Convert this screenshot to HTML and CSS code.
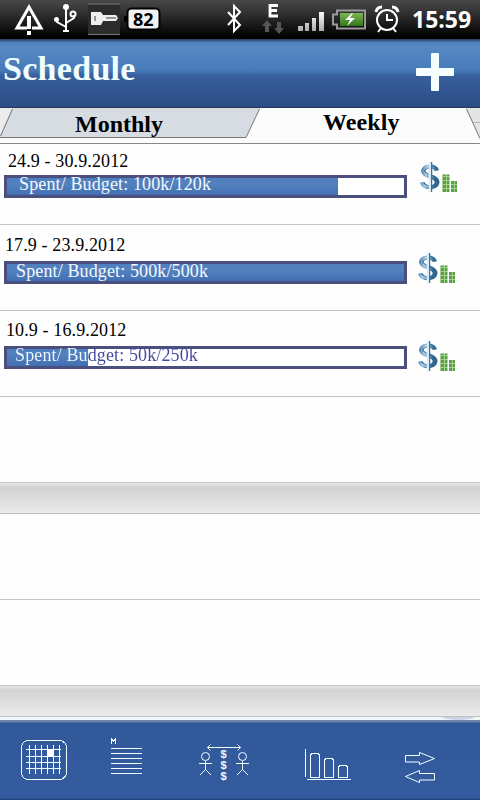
FILE: index.html
```html
<!DOCTYPE html>
<html lang="en">
<head>
<meta charset="utf-8">
<title>Schedule</title>
<link rel="stylesheet" href="styles.css">
</head>
<body>
<svg class="defs" aria-hidden="true">
  <defs>
    <linearGradient id="coin" x1="0" y1="0" x2="1" y2="0.2">
      <stop offset="0" stop-color="#3b7cab"/><stop offset="0.35" stop-color="#a9cde6"/><stop offset="0.6" stop-color="#7fabcb"/><stop offset="1" stop-color="#2d6690"/>
    </linearGradient>
    <linearGradient id="bars" x1="0" y1="0" x2="0" y2="1">
      <stop offset="0" stop-color="#fff"/><stop offset="1" stop-color="#aaa"/>
    </linearGradient>
    <linearGradient id="charge" x1="0" y1="0" x2="0" y2="1">
      <stop offset="0" stop-color="#7fb552"/><stop offset="1" stop-color="#31761c"/>
    </linearGradient>
    <pattern id="notes" width="4" height="4" patternUnits="userSpaceOnUse">
      <rect width="4" height="4" fill="#58a04a"/><path d="M0 3.5H4M3.5 0V4" stroke="#a5d090" stroke-width="1"/>
    </pattern>
    <symbol id="money" viewBox="0 0 40 32">
      <path id="ess" d="M18 9.500C17 4 5 4 4.500 10C4.500 16 18.500 14.500 18.500 21.500C17.500 28 5 27.500 3.500 21.500" fill="none" stroke="#2c648c" stroke-width="4"/>
      <path d="M16.800 9.500C16 4.500 4.500 4 3.700 10C4 16 17.500 14.500 17.300 21.500C16.500 27.500 4 27.500 2.700 21.500" fill="none" stroke="url(#coin)" stroke-width="3.200"/>
      <path d="M12.500 1V31" stroke="#3d7199" stroke-width="1.500"/><path d="M10.800 1V31" stroke="#dceefa" stroke-width="2.200"/>
      <path d="M23 13.500h7.500V31H23zM32 20h6v11h-6z" fill="url(#notes)"/>
    </symbol>
  </defs>
</svg>
<div class="status">
  <svg width="480" height="39" viewBox="0 0 480 39" fill="none" stroke="#fff">
    <path d="M27 28H17L29 7L41 28H32" stroke-width="3"/><path d="M29 16V29M29 31V35" stroke-width="4"/>
    <g stroke-width="2"><path d="M66 8V31M66 27L57 22V19M66 23L74 18V15"/><path d="M63 31h6"/><circle cx="66" cy="7" r="3" fill="#fff" stroke="none"/><circle cx="56.500" cy="19.500" r="2.500" fill="#fff" stroke="none"/><circle cx="73" cy="14" r="2.500"/></g>
    <rect x="88" y="4" width="32" height="31" fill="#2c2c2c" stroke="none"/><path d="M88 4h32M88 34.500h32" stroke="#777"/>
    <path d="M91 12h10l2 3h13l2 3-2 3h-13l-2 4H91z" fill="#eee" stroke="none"/><path d="M95 16v5M106 18h10" stroke="#777" stroke-width="1.500"/>
    <rect x="127.500" y="8.500" width="32" height="21" rx="4" fill="#f2f2f2" stroke="#000" stroke-width="2"/><path d="M124 19h4" stroke="#000" stroke-width="6"/>
    <path d="M228 12L240 25L234 31V6L240 12L228 25" stroke-width="2"/>
    <path d="M278 5.500h-8v10.500h8M270 10.500h7" stroke-width="2.800"/>
    <path d="M267 20l5 6h-3v6h-4v-6h-3zM279 34l5-6h-3v-6h-4v6h-3z" fill="#555" stroke="none"/>
    <path d="M298 26h5v5h-5zM305 23h4v8h-4zM312 18h4v13h-4zM319 12h5v19h-5z" fill="url(#bars)" stroke="none"/>
    <path d="M337 10.500h28v18h-28v-4h-4v-10h4z" stroke="#999" stroke-width="2"/><rect x="340" y="13" width="23" height="13" fill="url(#charge)" stroke="none"/><path d="M352 13l-7 7h5l-3 6 8-8h-5l3-5z" fill="#fff" stroke="none"/>
    <circle cx="387" cy="20" r="10" stroke-width="2"/><path d="M387 14v6h6M381 28l-3 4M393 28l3 4" stroke-width="2"/><path d="M376 12q1-5 6-5M392 7q5 0 6 5" stroke-width="3"/>
  </svg>
  <span class="battery">82</span>
  <span class="clock">15:59</span>
</div>
<header class="header">
  <h1>Schedule</h1>
  <svg class="add" width="40" height="40" viewBox="0 0 40 40"><path d="M17 1h6q1 0 1 1v14h14q1 0 1 1v6q0 1-1 1H24v14q0 1-1 1h-6q-1 0-1-1V24H2q-1 0-1-1v-6q0-1 1-1h14V2q0-1 1-1z" fill="#f6ffff"/></svg>
</header>
<nav class="tabs">
  <svg width="480" height="36" viewBox="0 0 480 36">
    <rect width="480" height="36" fill="#fafafa"/>
    <path d="M0 0H260L246 29.500H0z" fill="#d7dbe2"/><path d="M0 0H12L0 28z" fill="#ececec"/>
    <path d="M12.500 1L.5 28M0 29.500H246" fill="none" stroke="#777"/>
    <path d="M466 0H480V32z" fill="#e4e4e4"/><path d="M472 14.500h8" stroke="#bbb"/>
    <path d="M260 1H466L479.500 30V35H0V31H246z" fill="#fcfcfc"/>
    <path d="M246 29.500L259.500 1M466.500 1L480 30.500" fill="none" stroke="#777"/>
    <path d="M0 35.500H480" stroke="#888"/>
  </svg>
  <span class="tab monthly">Monthly</span>
  <span class="tab weekly">Weekly</span>
</nav>
<main>
  <section class="row first">
    <div class="info"><p class="date d1">24.9 - 30.9.2012</p><div class="meter m1"><div class="fill" style="width:83.500%"></div><span class="label l1">Spent/ Budget: 100k/120k</span></div></div>
    <svg class="money" width="40" height="32"><use href="#money"/></svg>
  </section>
  <section class="row">
    <div class="info"><p class="date d2">17.9 - 23.9.2012</p><div class="meter"><div class="fill" style="width:100%"></div><span class="label l2">Spent/ Budget: 500k/500k</span></div></div>
    <svg class="money" width="40" height="32"><use href="#money"/></svg>
  </section>
  <section class="row third">
    <div class="info"><p class="date d3">10.9 - 16.9.2012</p><div class="meter"><div class="fill" style="width:20.500%"></div><span class="label l3">Spent/ Budget: 50k/250k</span></div></div>
    <svg class="money" width="40" height="32"><use href="#money"/></svg>
  </section>
  <div class="row"></div>
  <div class="band"></div>
  <div class="row"></div>
  <div class="row"></div>
  <div class="band"></div>
</main>
<footer class="footer">
  <svg width="480" height="80" viewBox="0 0 480 80" fill="none" stroke="#f2ffff" shape-rendering="crispEdges">
    <rect x="21.500" y="20.500" width="45" height="39" rx="7"/>
    <path d="M26 29.500H61M26 36.500H61M26 42.500H61M26 48.500H61M29.500 25V54M35.500 25V54M41.500 25V54M47.500 25V54M53.500 25V54M59.500 25V54"/><path d="M47 29h6v7h-6z" fill="#fff" stroke="none"/>
    <path d="M111 28.500h31M111 33.500h31M111 38.500h31M111 43.500h31M111 48.500h31M111 53.500h31"/><path d="M111.500 24v-5l2 2 2-2v5"/>
    <g id="person" shape-rendering="auto"><circle cx="205.500" cy="36.500" r="4"/><path d="M199 43.500h13M205.500 41v9M205.500 49.500l-5.500 5.500M205.500 49.500l5.500 5.500"/></g>
    <use href="#person" x="37"/>
    <path shape-rendering="auto" d="M207 27.500h34M210.500 24.500l-3 3 3 3M237.500 24.500l3 3-3 3"/>
    <path d="M305.500 29v28M307 59.500h44M310.500 57.500V35l2-2h5l2 2v22.500zM324.500 57.500V40l2-2h5l2 2v17.500zM338.500 57.500V47l2-2h5l2 2v10.500z"/>
    <path shape-rendering="auto" d="M405.500 35.500h14v-3l15 6-15 6v-2.500h-14zM434.500 53.500h-15v-3l-14 6 14 6v-2.500h15z"/>
  </svg>
  <span class="dollars"><b>$</b><b>$</b><b>$</b></span>
</footer>
</body>
</html>
```
FILE: styles.css
```css
* { box-sizing: border-box; }
body { margin: 0; width: 480px; height: 800px; overflow: hidden; background: #fefefe; font-family: "Liberation Serif", serif; color: #000; }
svg { display: block; }
.defs { position: absolute; width: 0; height: 0; }
.status { position: relative; height: 39px; background: linear-gradient(#484848, #303030 35%, #080808 85%, #000); }
.battery { position: absolute; left: 133px; top: 9px; font: bold 18px/20px "Open Sans", sans-serif; }
.clock { position: absolute; left: 412px; top: 4px; color: #fff; font: bold 23px/31px "Open Sans", sans-serif; }
.header { height: 69px; display: flex; justify-content: space-between; padding: 13px 25px 0 3px; border-bottom: 1px solid #26364f; background: linear-gradient(#243c58, #4d80ba 5%, #5688c4 12%, #477bb8 46%, #385f9c 54%, #2c4c85); }
.header h1 { margin: 0; color: #effeff; font-size: 34px; line-height: 34px; letter-spacing: .3px; }
.tabs { position: relative; height: 36px; }
.tab { position: absolute; font-size: 24px; line-height: 28px; font-weight: bold; }
.monthly { left: 75px; top: 2px; }
.weekly { left: 323px; top: 0; letter-spacing: .1px; }
.row { height: 86px; border-bottom: 1px solid #c3c3c3; display: flex; gap: 11px; }
.row.first { height: 81px; }
.info { width: 403px; margin-left: 4px; padding-top: 10px; }
.date { margin: 0; font-size: 18px; line-height: 20px; height: 26px; white-space: nowrap; letter-spacing: .12px; }
.first .info { padding-top: 7px; }
.first .date { height: 24px; }
.third .info { padding-top: 9px; }
.d1 { padding-left: 4px; }
.d2 { padding-left: 1px; }
.d3 { padding-left: 2px; }
.meter { position: relative; height: 23px; border: 3px solid #4a4f7d; background: #fff; }
.fill { height: 100%; background: linear-gradient(#4e80c0, #5481bc 35%, #416fb4); }
.label { position: absolute; top: -3px; font-size: 18px; line-height: 20px; white-space: nowrap; color: #f2f8ff; letter-spacing: .13px; }
.l1 { left: 12px; top: -4px; }
.l2 { left: 9px; }
.l3 { left: 8px; top: -4px; color: transparent; background: linear-gradient(90deg, #f2f8ff 73px, #4547a0 73px); background-clip: text; -webkit-background-clip: text; }
.money { margin-top: 27px; margin-left: -1px; flex: none; }
.first .money { margin-top: 17px; margin-left: 1px; }
.third .money { margin-top: 29px; }
.band { height: 31px; border-bottom: 1px solid #bfbfbf; background: linear-gradient(#e4e4e4 1px, #d2d2d2 4px, #ebebeb); }
.footer { position: relative; height: 83px; border-top: 3px solid #eef8fc; background: linear-gradient(#6b86a8 0, #6b86a8 2px, #31599a 3px, #335b9e 78px, #254681 79px); }
.footer::before { content: ""; position: absolute; left: 443px; top: -3px; width: 31px; height: 3px; border-radius: 0 0 15px 15px / 0 0 3px 3px; background: #cdd3ea; }
.dollars { position: absolute; left: 219px; top: 29px; width: 9px; display: grid; grid-auto-rows: 11px; text-align: center; color: #eefaff; font: bold 11px/11px "Liberation Sans", sans-serif; }
```
